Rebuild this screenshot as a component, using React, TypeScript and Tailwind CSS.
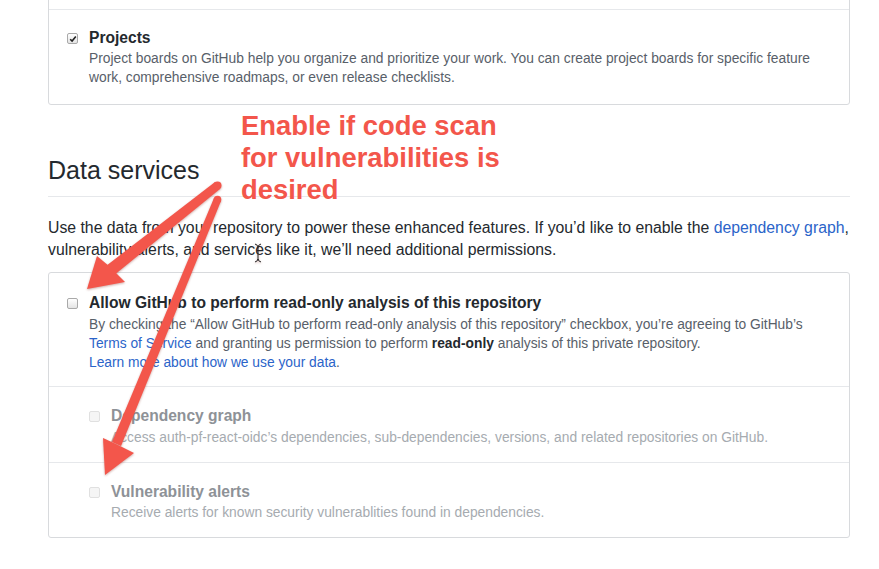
import React from "react";

const font = { fontFamily: '"Liberation Sans", Arial, sans-serif' };

function Box({ checked, disabled }: { checked?: boolean; disabled?: boolean }) {
  if (disabled) {
    return <span className="mt-[5px] block h-[11px] w-[11px] shrink-0 rounded-[2px] border border-[#e0e0e0] bg-[#f5f5f5]" />;
  }
  return (
    <span className="mt-[5px] flex h-[11px] w-[11px] shrink-0 items-center justify-center rounded-[2px] border border-[#a9a9a9] bg-gradient-to-b from-white to-[#e4e4e4]">
      {checked && (
        <svg width="8" height="8" viewBox="0 0 8 8">
          <path d="M1.2 4.2 L3.1 6.1 L6.8 1.6" fill="none" stroke="#222" strokeWidth="1.6" />
        </svg>
      )}
    </span>
  );
}

function Arrows() {
  return (
    <svg
      className="pointer-events-none absolute left-0 top-0"
      width="879"
      height="569"
      style={{ filter: "drop-shadow(0 1px 1px rgba(120,20,10,0.35))" }}
    >
      <g fill="#f3564b">
        {/* arrow to "Allow GitHub" checkbox */}
        <polygon points="215,182 220,189 113,276 106,266" />
        <circle cx="217.5" cy="185.5" r="4" />
        <polygon points="87,289 97,256 109,266 125,282" />
        {/* arrow to "Vulnerability alerts" */}
        <polygon points="214,198 221,201 121,446 112,442" />
        <circle cx="217.5" cy="199.5" r="3.8" />
        <polygon points="105,475 103,438 116,444 134,453" />
      </g>
      {/* text cursor */}
      <g stroke="#222" strokeWidth="1" fill="none">
        <path d="M255 244 Q258 245 258 247 Q258 245 261 244" />
        <path d="M258 247 V260" />
        <path d="M255 262 Q258 261 258 259 Q258 261 261 262" />
      </g>
    </svg>
  );
}

export default function App() {
  return (
    <div className="relative h-[569px] w-[879px] overflow-hidden bg-white" style={font}>
      <div className="ml-[48px] w-[802px]">
        {/* Features box (cut off at the top) */}
        <div className="-mt-[20px] rounded-[3px] border border-[#d8dadd]">
          <div className="h-[29px] border-b border-[#e6e8eb]" />
          <div className="flex gap-[11px] pl-[18px] pr-4 pb-[17px] pt-[18px]">
            <Box checked />
            <div>
              <div className="text-[15.6px] font-bold leading-[20px] text-[#24292e]">Projects</div>
              <p className="mt-[1px] text-[13.8px] leading-[19px] text-[#586069]">
                Project boards on GitHub help you organize and prioritize your work. You can create project boards for specific feature
                <br />
                work, comprehensive roadmaps, or even release checklists.
              </p>
            </div>
          </div>
        </div>

        {/* Data services */}
        <h2 className="mt-[50px] border-b border-[#e6e8eb] pb-[11px] text-[25px] font-normal leading-[30px] text-[#24292e]">
          Data services
        </h2>
        <p className="mt-[20px] text-[15.8px] leading-[22px] text-[#24292e]">
          Use the data from your repository to power these enhanced features. If you’d like to enable the{" "}
          <span className="text-[#2b64c9]">dependency graph</span>,
          <br />
          vulnerability alerts, and services like it, we’ll need additional permissions.
        </p>

        <div className="mt-[11px] rounded-[3px] border border-[#d8dadd]">
          <div className="flex gap-[11px] border-b border-[#e6e8eb] pl-[18px] pr-4 pb-[14px] pt-[20px]">
            <Box />
            <div>
              <div className="text-[15.6px] font-bold leading-[20px] text-[#24292e]">
                Allow GitHub to perform read-only analysis of this repository
              </div>
              <p className="mt-[2px] text-[13.8px] leading-[19px] text-[#586069]">
                By checking the “Allow GitHub to perform read-only analysis of this repository” checkbox, you’re agreeing to GitHub’s
                <br />
                <span className="text-[#2b64c9]">Terms of Service</span> and granting us permission to perform{" "}
                <b className="text-[#24292e]">read-only</b> analysis of this private repository.
                <br />
                <span className="text-[#2b64c9]">Learn more about how we use your data</span>.
              </p>
            </div>
          </div>
          <div className="flex gap-[11px] border-b border-[#e6e8eb] pl-[40px] pr-4 pb-[15px] pt-[19px]">
            <Box disabled />
            <div>
              <div className="text-[15.6px] font-bold leading-[20px] text-[#8e9297]">Dependency graph</div>
              <p className="mt-[2px] text-[13.8px] leading-[19px] text-[#a6abb0]">
                Access auth-pf-react-oidc’s dependencies, sub-dependencies, versions, and related repositories on GitHub.
              </p>
            </div>
          </div>
          <div className="flex gap-[11px] pl-[40px] pr-4 pb-[15px] pt-[19px]">
            <Box disabled />
            <div>
              <div className="text-[15.6px] font-bold leading-[20px] text-[#8e9297]">Vulnerability alerts</div>
              <p className="mt-[1px] text-[13.8px] leading-[19px] text-[#a6abb0]">
                Receive alerts for known security vulnerablities found in dependencies.
              </p>
            </div>
          </div>
        </div>
      </div>

      {/* Annotation */}
      <div className="absolute left-[241px] top-[110px] text-[27.4px] font-bold leading-[32px] text-[#f3564b]">
        Enable if code scan
        <br />
        for vulnerabilities is
        <br />
        desired
      </div>
      <Arrows />
    </div>
  );
}
